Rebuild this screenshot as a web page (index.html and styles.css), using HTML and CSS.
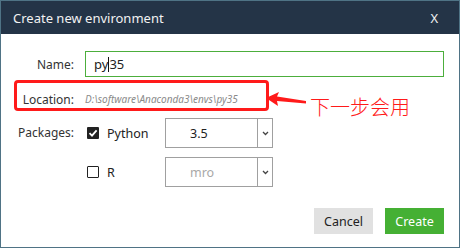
FILE: index.html
```html
<!DOCTYPE html>
<html lang="en">
<head>
    <meta charset="UTF-8">
    <title>Create new environment</title>
    <link rel="stylesheet" href="styles.css">
</head>
<body>
    <div class="dialog">
        <div class="titlebar">
            <span>Create new environment</span>
            <span class="close">X</span>
        </div>

        <div class="form">
            <div class="row row-name">
                <label class="label">Name:</label>
                <div class="input"><span>py</span><span class="caret"></span><span>35</span></div>
            </div>

            <div class="row row-location">
                <label class="label">Location:</label>
                <div class="path">D:\software\Anaconda3\envs\py35</div>
            </div>

            <div class="row row-pkg">
                <label class="label label-top">Packages:</label>
                <div class="pkg">
                    <span class="check checked">
                        <svg width="12" height="12" viewBox="0 0 12 12"><path d="M2.5 6.2 L5 8.6 L9.6 3.4" fill="none" stroke="#fff" stroke-width="1.8"/></svg>
                    </span>
                    <span class="pkg-name">Python</span>
                    <div class="select">
                        <span class="value">3.5</span>
                        <span class="arrow"><svg width="7" height="5" viewBox="0 0 7 5"><path d="M1 1 L3.5 3.5 L6 1" fill="none" stroke="#444" stroke-width="1.3"/></svg></span>
                    </div>
                </div>
            </div>

            <div class="row row-pkg">
                <span class="label"></span>
                <div class="pkg">
                    <span class="check"></span>
                    <span class="pkg-name">R</span>
                    <div class="select">
                        <span class="value muted">mro</span>
                        <span class="arrow"><svg width="7" height="5" viewBox="0 0 7 5"><path d="M1 1 L3.5 3.5 L6 1" fill="none" stroke="#444" stroke-width="1.3"/></svg></span>
                    </div>
                </div>
            </div>

            <div class="buttons">
                <button class="btn btn-cancel">Cancel</button>
                <button class="btn btn-create">Create</button>
            </div>
        </div>

        <!-- пометка поверх скриншота -->
        <div class="mark-box"></div>
        <svg class="mark-arrow" width="42" height="16" viewBox="0 0 42 16">
            <polygon points="0,6 13,0 11,4.5 40,9 40,11.5 11,9 12,14" fill="#ff1a1a"/>
        </svg>
        <div class="mark-text">下一步会用</div>
    </div>
</body>
</html>
```

FILE: styles.css
```css
body {
    margin: 0;
    background: #fff;
    font-family: "Noto Sans", "Open Sans", sans-serif;
    font-size: 12px;
    color: #333;
}
.dialog {
    position: relative;
    width: 460px;
    height: 248px;
    box-sizing: border-box;
    border: 1px solid #4f7385;
    background: #fff;
}
.titlebar {
    height: 33px;
    background: #243447;
    color: #f2f2f2;
    font-size: 13px;
    display: flex;
    justify-content: space-between;
    align-items: center;
    padding: 0 21px 0 12px;
}
.form {
    padding: 17px 15px 0 0;
}
.row {
    display: grid;
    grid-template-columns: 73px 1fr;
    column-gap: 11px;
    align-items: center;
}
.label {
    text-align: right;
    color: #333;
}
.label-top {
    align-self: start;
    padding-top: 6px;
}
.row-name {
    height: 26px;
}
.input {
    height: 26px;
    box-sizing: border-box;
    border: 1px solid #4cae3c;
    padding-left: 8px;
    font-size: 13px;
    color: #222;
    display: flex;
    align-items: center;
}
.caret {
    display: inline-block;
    width: 1px;
    height: 15px;
    background: #111;
}
.row-location {
    height: 20px;
    margin-top: 12px;
}
.path {
    font-size: 10px;
    font-style: italic;
    color: #8a8a8a;
}
.row-pkg {
    margin-top: 9px;
}
.pkg {
    display: flex;
    align-items: center;
    padding-left: 2px;
}
.check {
    width: 12px;
    height: 12px;
    box-sizing: border-box;
    border: 1.5px solid #222;
    border-radius: 1px;
    display: flex;
}
.check.checked {
    background: #222;
    border: none;
}
.pkg-name {
    margin-left: 8px;
    width: 58px;
    font-size: 12.5px;
    color: #222;
}
.select {
    width: 108px;
    height: 30px;
    box-sizing: border-box;
    border: 1px solid #a0a0a0;
    display: flex;
    align-items: center;
}
.value {
    flex: 1;
    padding-left: 24px;
    font-size: 12.5px;
    color: #222;
}
.value.muted {
    color: #a8a8a8;
}
.arrow {
    width: 14px;
    height: 100%;
    border-left: 1px solid #a0a0a0;
    display: flex;
    align-items: center;
    justify-content: center;
}
.buttons {
    display: flex;
    justify-content: flex-end;
    gap: 12px;
    margin-top: 21px;
}
.btn {
    width: 59px;
    height: 26px;
    border: none;
    font-family: inherit;
    font-size: 12.5px;
    cursor: pointer;
}
.btn-cancel {
    background: #e1e1e1;
    color: #222;
}
.btn-create {
    background: #45b034;
    color: #fff;
}
.mark-box {
    position: absolute;
    left: 13px;
    top: 79px;
    width: 249px;
    height: 25px;
    border: 3px solid #ff1a1a;
    border-radius: 4px;
}
.mark-arrow {
    position: absolute;
    left: 265px;
    top: 91px;
}
.mark-text {
    position: absolute;
    left: 309px;
    top: 94px;
    font-family: "Noto Sans CJK SC", sans-serif;
    font-size: 20px;
    font-weight: 300;
    color: #ff1a1a;
    line-height: 24px;
}
```
